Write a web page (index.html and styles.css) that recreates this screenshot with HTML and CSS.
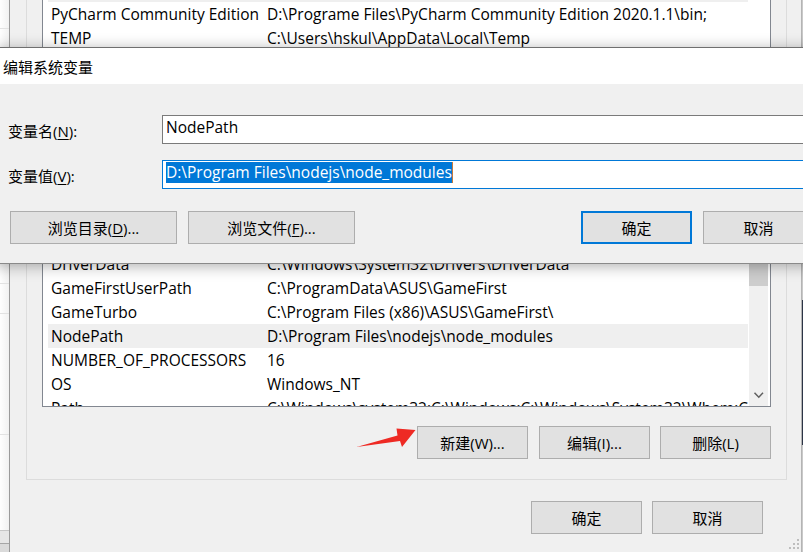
FILE: index.html
```html
<!DOCTYPE html>
<html lang="zh-CN">
<head>
<meta charset="utf-8">
<title>编辑系统变量</title>
<link rel="stylesheet" href="styles.css">
</head>
<body>
<div class="desk">
  <div class="side-win">
    <div class="side-row s1"></div>
    <div class="side-row s2"></div>
    <div class="side-row s3"></div>
    <div class="side-row s4"></div>
    <div class="side-row s5"></div>
    <div class="side-row s6"></div>
    <div class="side-row s7"></div>
  </div>

  <div class="desk-edge"></div>

  <div class="env-win">
    <div class="group group-user">
      <div class="listbox list-user">
        <div class="rows">
          <div class="row selected"><span class="cell">Path</span><span class="cell">C:\Users\hskul\AppData\Local\Microsoft\WindowsApps;</span></div>
          <div class="row"><span class="cell">PyCharm Community Edition</span><span class="cell">D:\Programe Files\PyCharm Community Edition 2020.1.1\bin;</span></div>
          <div class="row"><span class="cell">TEMP</span><span class="cell">C:\Users\hskul\AppData\Local\Temp</span></div>
          <div class="row"><span class="cell">TMP</span><span class="cell">C:\Users\hskul\AppData\Local\Temp</span></div>
        </div>
      </div>
    </div>

    <div class="group group-sys">
      <div class="listbox list-sys">
        <div class="rows">
          <div class="row"><span class="cell">ComSpec</span><span class="cell">C:\Windows\system32\cmd.exe</span></div>
          <div class="row"><span class="cell">DriverData</span><span class="cell">C:\Windows\System32\Drivers\DriverData</span></div>
          <div class="row"><span class="cell">GameFirstUserPath</span><span class="cell">C:\ProgramData\ASUS\GameFirst</span></div>
          <div class="row"><span class="cell">GameTurbo</span><span class="cell">C:\Program Files (x86)\ASUS\GameFirst\</span></div>
          <div class="row selected"><span class="cell">NodePath</span><span class="cell">D:\Program Files\nodejs\node_modules</span></div>
          <div class="row"><span class="cell">NUMBER_OF_PROCESSORS</span><span class="cell">16</span></div>
          <div class="row"><span class="cell">OS</span><span class="cell">Windows_NT</span></div>
          <div class="row"><span class="cell">Path</span><span class="cell">C:\Windows\system32;C:\Windows;C:\Windows\System32\Wbem;C:\Windows\System32\WindowsPowerShell\v1.0\</span></div>
        </div>
        <div class="vscroll">
          <div class="sb-btn sb-up"></div>
          <div class="sb-thumb"></div>
          <div class="sb-fill"></div>
          <div class="sb-btn sb-down">
            <svg width="19" height="17" viewBox="0 0 19 17"><path d="M5.5 3.8 L9.8 8.2 L14 3.8" fill="none" stroke="#606060" stroke-width="1.5"/></svg>
          </div>
        </div>
      </div>
      <div class="btn-row group-btns">
        <button class="btn">新建(W)...</button>
        <button class="btn">编辑(I)...</button>
        <button class="btn">删除(L)</button>
      </div>
    </div>

    <div class="btn-row win-btns">
      <button class="btn">确定</button>
      <button class="btn">取消</button>
    </div>
  </div>

  <svg class="grip" width="14" height="15" viewBox="0 0 14 15">
    <rect x="10" y="2" width="2" height="2" fill="#bdbdbd"/>
    <rect x="6" y="6" width="2" height="2" fill="#bdbdbd"/>
    <rect x="10" y="6" width="2" height="2" fill="#bdbdbd"/>
    <rect x="2" y="10" width="2" height="2" fill="#bdbdbd"/>
    <rect x="6" y="10" width="2" height="2" fill="#bdbdbd"/>
    <rect x="10" y="10" width="2" height="2" fill="#bdbdbd"/>
  </svg>

  <div class="dialog">
    <div class="titlebar">编辑系统变量</div>
    <div class="dlg-body">
      <div class="field">
        <label class="field-label">变量名(<u>N</u>):</label>
        <div class="textbox"><span class="tb-text">NodePath</span></div>
      </div>
      <div class="field field-2">
        <label class="field-label">变量值(<u>V</u>):</label>
        <div class="textbox focused"><span class="tb-text sel">D:\Program Files\nodejs\node_modules</span><span class="caret"></span></div>
      </div>
      <div class="dlg-buttons">
        <button class="btn btn-wide">浏览目录(<u>D</u>)...</button>
        <button class="btn btn-wide">浏览文件(<u>F</u>)...</button>
        <span class="spacer"></span>
        <button class="btn btn-default">确定</button>
        <button class="btn">取消</button>
      </div>
    </div>
  </div>

  <svg class="arrow" width="803" height="552" viewBox="0 0 803 552">
    <polygon points="356.5,447 397.5,435.5 396.5,428.5 415.5,430 402,447 400,441" fill="#ee2a24"/>
  </svg>
</div>
</body>
</html>
```

FILE: styles.css
```css
* { box-sizing: border-box; }

html, body {
  margin: 0;
  padding: 0;
}

body {
  width: 803px;
  height: 552px;
  overflow: hidden;
  font-family: "Open Sans", "Noto Sans CJK SC", sans-serif;
  font-size: 15px;
  color: #000;
}

.desk {
  position: relative;
  width: 803px;
  height: 552px;
  overflow: hidden;
  background: #c9c9c9;
}

/* window peeking at the far left */
.side-win {
  position: absolute;
  left: 0;
  top: 0;
  width: 9px;
  height: 552px;
  display: flex;
  flex-direction: column;
  background: linear-gradient(to right, #fefefe, #f1f1f1);
}
.side-row { border-bottom: 1px solid #e2e2e2; flex: none; }
.s1 { height: 29px; }
.s2 { height: 255px; }
.s3 { height: 30px; }
.s4 { height: 121px; }
.s5 { height: 96px; border-bottom-color: #c6c6c6; }
.s6 { height: 13px; background: #e6e6e6; border-bottom-color: #a6a6a6; }
.s7 { flex: 1; background: #dadada; border-bottom: 0; }

.desk-edge {
  position: absolute;
  left: 802px;
  top: 300px;
  width: 1px;
  height: 145px;
  background: #2c3446;
}

/* environment variables window behind */
.env-win {
  position: absolute;
  left: 9px;
  top: -40px;
  width: 793px;
  height: 640px;
  background: #f0f0f0;
  border-left: 1px solid #9a9a9a;
  border-right: 1px solid #b4b4b4;
  display: flex;
  flex-direction: column;
}

.group {
  margin: 0 14px 0 16px;
  border: 1px solid #dcdcdc;
  padding: 0 15px;
}
.group-user {
  padding-top: 16px;
  padding-bottom: 40px;
}
.group-sys {
  margin-top: 20px;
  padding-top: 65px;
  padding-bottom: 20px;
}

.listbox {
  background: #fff;
  border: 1px solid #828790;
  display: flex;
  overflow: hidden;
}
.list-user { height: 123px; }
.list-sys { height: 180px; }

.rows {
  flex: none;
  width: 700px;
  margin-left: 5px;
  overflow: hidden;
}
.row {
  height: 24px;
  line-height: 24px;
  font-size: 15.5px;
  display: grid;
  grid-template-columns: 216px 484px;
  white-space: nowrap;
}
.row.selected { background: #efefef; }
.cell {
  padding-left: 3px;
  overflow: hidden;
}

.vscroll {
  flex: none;
  width: 19px;
  margin-left: 1px;
  background: #f0f0f0;
  display: flex;
  flex-direction: column;
}
.sb-btn { height: 17px; flex: none; }
.sb-down svg { display: block; }
.sb-thumb {
  margin-top: 18px;
  height: 23px;
  background: #cdcdcd;
  flex: none;
}
.sb-fill { flex: 1; }

.btn-row {
  display: flex;
  justify-content: flex-end;
}
.group-btns {
  margin-top: 19px;
  gap: 11px;
  padding-right: 0;
}
.group-btns .btn:last-child { margin-left: -1px; }
.win-btns {
  margin-top: 21px;
  gap: 10px;
  padding-right: 38px;
}

.btn {
  width: 111px;
  height: 33px;
  background: #e1e1e1;
  border: 1px solid #adadad;
  padding: 0;
  margin: 0;
  font: inherit;
  font-size: 15px;
  line-height: 20px;
  color: #000;
  text-align: center;
}
.btn u { text-underline-offset: 2px; }

.grip {
  position: absolute;
  left: 787px;
  top: 537px;
}

/* front dialog */
.dialog {
  position: absolute;
  left: -5px;
  top: 47px;
  width: 840px;
  border: 1px solid #6f6f6f;
  border-bottom-color: #8a8a8a;
  background: #f0f0f0;
  box-shadow: 0 2px 14px rgba(0, 0, 0, 0.32);
}
.titlebar {
  height: 36px;
  background: #fff;
  padding: 2px 0 0 7px;
  line-height: 34px;
  font-size: 15px;
  color: #000;
}
.dlg-body {
  height: 179px;
  padding: 31px 20px 19px 12px;
}
.field {
  display: flex;
  align-items: center;
  height: 29px;
}
.field-2 { margin-top: 16px; }
.field-label {
  width: 154px;
  flex: none;
  line-height: 20px;
  padding-top: 3px;
}
.field-label u { text-underline-offset: 2px; }
.textbox {
  flex: 1;
  height: 29px;
  background: #fff;
  border: 1px solid #7a7a7a;
  padding: 1px 0 0 3px;
  display: flex;
  align-items: flex-start;
  white-space: nowrap;
}
.textbox.focused { border-color: #0078d7; }
.tb-text {
  line-height: 21px;
  height: 21px;
  font-size: 15.5px;
}
.tb-text.sel {
  background: #0078d7;
  color: #fff;
}
.caret {
  width: 1px;
  height: 21px;
  background: #c77a3a;
}

.dlg-buttons {
  display: flex;
  margin-top: 22px;
  padding-left: 2px;
  gap: 11px;
}
.btn-wide { width: 167px; }
.btn-default { border: 2px solid #0078d7; }
.spacer { flex: 1; }

.arrow {
  position: absolute;
  left: 0;
  top: 0;
  pointer-events: none;
}
```
